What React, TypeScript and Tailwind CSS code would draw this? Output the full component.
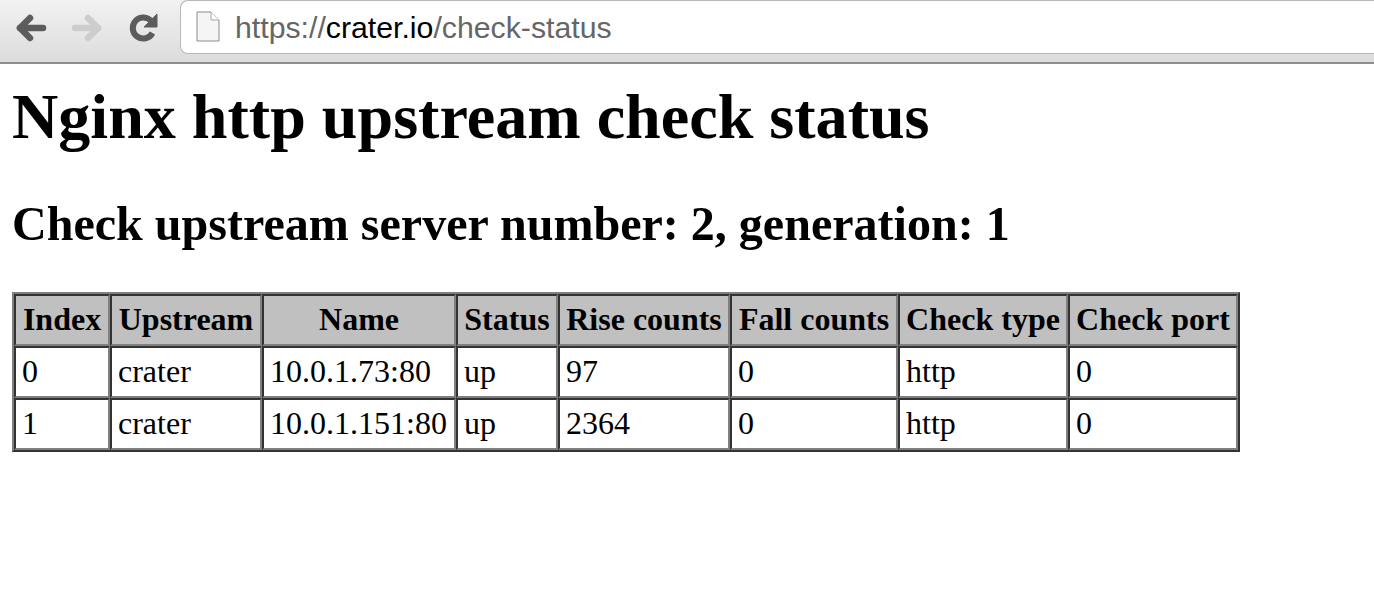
// Nginx upstream check status page inside a browser chrome

import React from 'react';

const headers = ['Index', 'Upstream', 'Name', 'Status', 'Rise counts', 'Fall counts', 'Check type', 'Check port'];

const rows = [
  ['0', 'crater', '10.0.1.73:80', 'up', '97', '0', 'http', '0'],
  ['1', 'crater', '10.0.1.151:80', 'up', '2364', '0', 'http', '0']
];

const widths = ['w-[96px]', 'w-[152px]', 'w-[194px]', 'w-[102px]', 'w-[172px]', 'w-[168px]', 'w-[170px]', 'w-[170px]'];

function BackArrow({ color }: { color: string }) {
  return (
    <svg width="32" height="32" viewBox="0 0 32 32" fill="none" stroke={color} strokeWidth="6.5" strokeLinecap="round" strokeLinejoin="round">
      <path d="M15 7 L5 17 L15 27" />
      <path d="M5 17 H28" />
    </svg>
  );
}

function ReloadIcon() {
  return (
    <svg width="32" height="32" viewBox="0 0 32 32">
      <path d="M23.5 10.5 A10.5 10.5 0 1 0 24.5 22" fill="none" stroke="#5c5c5c" strokeWidth="6" />
      <path d="M29 3 L29 16 L16 16 Z" fill="#5c5c5c" stroke="#5c5c5c" strokeLinejoin="round" />
    </svg>
  );
}

function PageIcon() {
  return (
    <svg width="24" height="32" viewBox="0 0 24 32">
      <path d="M1 1 H15 L23 9 V30 H1 Z" fill="#f5f5f5" stroke="#8a8a8a" strokeWidth="1" />
      <path d="M15 1 V9 H23" fill="#ffffff" stroke="#a8a8a8" strokeWidth="1" />
    </svg>
  );
}

export default function App() {
  return (
    <div className="min-h-[598px] bg-white font-['Liberation_Serif',serif] text-black">
      {/* Browser toolbar */}
      <div className="flex h-[64px] border-b-2 border-[#8e8e8e] bg-gradient-to-b from-[#f2f2f2] to-[#dcdcdc]">
        <div className="flex h-[54px] w-[180px] items-center pl-[15px]">
          <BackArrow color="#5c5c5c" />
          <div className="ml-[24px] -scale-x-100">
            <BackArrow color="#cdcdcd" />
          </div>
          <div className="ml-[25px]">
            <ReloadIcon />
          </div>
        </div>
        <div className="flex h-[54px] flex-1 items-center rounded-l-[8px] border border-r-0 border-[#b8b8b8] bg-white pl-[15px] font-['Liberation_Sans',sans-serif] text-[30.25px] text-[#666666]">
          <PageIcon />
          <span className="ml-[15px] pt-[2px]">
            https://<span className="text-black">crater.io</span>/check-status
          </span>
        </div>
      </div>

      {/* Page content */}
      <div className="px-[12px]">
        <h1 className="pt-[20px] text-[64.1px] leading-[66px] font-bold">Nginx http upstream check status</h1>
        <h2 className="mt-[47px] text-[48.05px] leading-[54px] font-bold">Check upstream server number: 2, generation: 1</h2>

        <table className="mt-[41px] w-[1228px] table-fixed border-separate border-spacing-0 border-2 border-t-[#808080] border-r-[#333333] border-b-[#333333] border-l-[#808080] text-[32px] leading-[36px]">
          <thead>
            <tr>
              {headers.map((header, i) => (
                <th key={header} className={`${widths[i]} h-[52px] border-2 border-t-[#333333] border-r-[#808080] border-b-[#808080] border-l-[#333333] bg-[#c0c0c0] p-0 pb-[2px] text-center font-bold whitespace-nowrap`}>
                  {header}
                </th>
              ))}
            </tr>
          </thead>
          <tbody>
            {rows.map((row) => (
              <tr key={row[2]}>
                {row.map((cell, i) => (
                  <td key={i} className="h-[52px] border-2 border-t-[#333333] border-r-[#808080] border-b-[#808080] border-l-[#333333] px-[6px] pb-[2px] whitespace-nowrap">
                    {cell}
                  </td>
                ))}
              </tr>
            ))}
          </tbody>
        </table>
      </div>
    </div>
  );
}
